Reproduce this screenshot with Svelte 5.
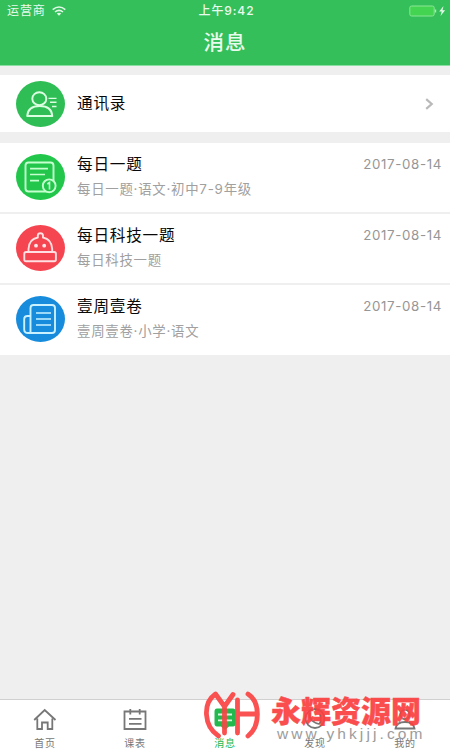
<script lang="ts">
  interface Message {
    icon: string;
    title: string;
    detail: string;
    date: string;
  }

  const messages: Message[] = [
    { icon: 'daily', title: '每日一题', detail: '每日一题·语文·初中7-9年级', date: '2017-08-14' },
    { icon: 'science', title: '每日科技一题', detail: '每日科技一题', date: '2017-08-14' },
    { icon: 'paper', title: '壹周壹卷', detail: '壹周壹卷·小学·语文', date: '2017-08-14' }
  ];

  const tabs = [
    { id: 'home', label: '首页' },
    { id: 'course', label: '课表' },
    { id: 'message', label: '消息' },
    { id: 'find', label: '发现' },
    { id: 'mine', label: '我的' }
  ];

  let active = $state('message');
</script>

<div class="screen">
  <header>
    <div class="status">
      <div class="carrier">
        <span>运营商</span>
        <svg width="14" height="10" viewBox="0 0 14 10" fill="none" stroke="#e3f9e8" stroke-width="1.6">
          <path d="M.7 3.6Q7-1.6 13.3 3.6M3 6Q7 2.8 11 6" />
          <path d="M4.8 7.5Q7 6 9.2 7.5L7 9.8Z" fill="#e3f9e8" stroke="none" />
        </svg>
      </div>
      <span class="time">上午9:42</span>
      <div class="battery">
        <svg width="37" height="12" viewBox="0 0 37 12">
          <rect x=".8" y="1" width="24.4" height="10" rx="1.8" fill="#43d451" stroke="#8be695" />
          <path d="M26.5 4.5v3" stroke="#a5edb0" stroke-width="1.4" />
          <path d="M34.5 1l-4.3 5.5h2.5L31.5 11l4.6-5.8h-2.6Z" fill="#e3f9e8" />
        </svg>
      </div>
    </div>
    <h1>消息</h1>
  </header>

  <main>
    <button class="contacts">
      <svg class="avatar" viewBox="0 0 49 46" preserveAspectRatio="none" fill="none" stroke="#dcffe2" stroke-width="1.9">
        <ellipse cx="24.5" cy="23" rx="24.5" ry="23" fill="#2fbe55" stroke="none" />
        <ellipse cx="23.3" cy="17.7" rx="7" ry="6.5" />
        <path d="M11.2 35Q12 25 23.7 25Q35.5 25 36.3 35Z" stroke-linejoin="round" />
        <path d="M32.5 17.4h8M34 21.3h6.5M36 25.5h4.5" stroke-width="1.4" />
      </svg>
      <span class="name">通讯录</span>
      <svg class="arrow" width="9" height="12" viewBox="0 0 9 12" fill="none" stroke="#b9b9b9" stroke-width="2.2">
        <path d="M1.2 1.2L6.7 6L1.2 10.8" />
      </svg>
    </button>

    <ul>
      {#each messages as message}
        <li>
          <svg class="avatar" viewBox="0 0 49 46" preserveAspectRatio="none" fill="none" stroke-width="1.9">
            {#if message.icon === 'daily'}
              <ellipse cx="24.5" cy="23" rx="24.5" ry="23" fill="#22c64b" />
              <g stroke="#c5ffd0">
                <rect x="9.5" y="8.5" width="28" height="29" rx="3" />
                <path d="M14 14.7h18M14 20.5h15M14 26.7h9" stroke-width="1.7" />
                <circle cx="33.2" cy="31.8" r="6.4" fill="#22c64b" />
                <path d="M31.3 30l2.2-1.5v7" stroke-width="1.6" />
              </g>
            {:else if message.icon === 'science'}
              <ellipse cx="24.5" cy="23" rx="24.5" ry="23" fill="#f54550" />
              <g stroke="#ffdfe1" stroke-linejoin="round">
                <path d="M12.5 27V24Q13 14 21.8 12.5V10.5Q22 8.3 24.4 8.3Q26.8 8.3 27 10.5V12.5Q35.5 14 36.2 24V27" />
                <rect x="8.3" y="27" width="31.6" height="9.2" rx="1.8" />
                <circle cx="20" cy="20.7" r="1.9" fill="#ffe9ea" stroke="none" />
                <circle cx="28.2" cy="20.7" r="1.9" fill="#ffe9ea" stroke="none" />
              </g>
            {:else}
              <ellipse cx="24.5" cy="23" rx="24.5" ry="23" fill="#178cdc" />
              <g stroke="#c9f1ff">
                <path d="M14.5 36.5V12Q14.5 9 17.5 9H36Q39 9 39 12V34Q39 37 36 37H12Q8.2 37 8.2 33.5V23Q8.2 20 11.5 20H14.5" />
                <path d="M20 17h15M20 23h15M20 29h15" stroke-width="1.7" />
              </g>
            {/if}
          </svg>
          <div class="text">
            <div class="top">
              <span class="name">{message.title}</span>
              <span class="date">{message.date}</span>
            </div>
            <p>{message.detail}</p>
          </div>
        </li>
      {/each}
    </ul>
  </main>

  <nav>
    {#each tabs as tab}
      <button class="tab" class:active={active === tab.id} onclick={() => (active = tab.id)}>
        <svg width="26" height="24" viewBox="0 0 26 24" fill="none" stroke="currentColor" stroke-width="1.8">
          {#if tab.id === 'home'}
            <path d="M2.2 12L12.7 2L23.5 12M5.3 10.5V21H10V14.5H15.7V21H20.3V10.5" />
          {:else if tab.id === 'course'}
            <path d="M2.5 3.5H23.5V21H2.5ZM8.3 1V6.5M17.7 1V6.5M7 10.8H19.5M7 15.8H19.5" />
          {:else if tab.id === 'message'}
            <path d="M5 .5H21Q23.5 .5 23.5 3.5V15.5Q23.5 18.5 21 18.5H17L13 22L9 18.5H5Q2.5 18.5 2.5 15.5V3.5Q2.5 .5 5 .5Z" fill="currentColor" stroke="none" />
            <path d="M6 6.5H20M6 12.3H20" stroke="#d9f5df" />
          {:else if tab.id === 'find'}
            <circle cx="13" cy="10.5" r="9.5" />
            <path d="M8 5Q6 13 17 16Q20 14 18 6" />
          {:else}
            <circle cx="13" cy="6.5" r="4.6" />
            <path d="M3.5 20.5Q4.5 14 13 14Q21.5 14 22.5 20.5Z" />
          {/if}
        </svg>
        <span>{tab.label}</span>
      </button>
    {/each}
  </nav>

  <div class="watermark">
    <svg width="56" height="50" viewBox="0 0 56 50" fill="none" stroke="#fa4545" stroke-width="4.8" stroke-linecap="round" stroke-linejoin="round">
      <path d="M14.5 46C-.5 36 -1.5 13 11.5 4L20.5 16.5L29 4.5M20.5 16.5V43" />
      <path d="M33.5 10V43M33.5 24H53M44 4C56.5 12 56.5 36 44 46" />
    </svg>
    <div class="brand">
      <strong>永辉资源网</strong>
      <span>www.yhkjjj.com</span>
    </div>
  </div>
</div>

<style>
  :global(body) {
    margin: 0;
  }

  .screen {
    position: relative;
    display: flex;
    flex-direction: column;
    width: 450px;
    height: 750px;
    overflow: hidden;
    background: #efefef;
    color: #080808;
    font-family: Inter, "Noto Sans CJK SC", sans-serif;
  }

  header {
    box-sizing: border-box;
    height: 66px;
    background: #34bf5b;
    border-bottom: 1px solid #8cdda1;
    color: #e9fbed;
  }

  .status {
    display: grid;
    grid-template-columns: 1fr auto 1fr;
    align-items: center;
    height: 21px;
    padding: 0 4px 0 7px;
    font-size: 12px;
    line-height: 20px;
    letter-spacing: 0.9px;
  }

  .carrier {
    display: flex;
    align-items: center;
    gap: 6px;
  }

  .time {
    font-weight: 500;
    letter-spacing: 0.9px;
  }

  .battery {
    display: flex;
    justify-content: flex-end;
  }

  h1 {
    margin: 0;
    font-size: 20.5px;
    font-weight: 500;
    line-height: 44px;
    letter-spacing: 1px;
    text-align: center;
  }

  main {
    flex: 1;
    padding-top: 9px;
  }

  button {
    padding: 0;
    border: none;
    background: none;
    font-family: inherit;
    color: inherit;
    cursor: pointer;
  }

  .contacts {
    display: flex;
    align-items: center;
    width: 100%;
    height: 57px;
    padding: 0 16px;
    background: #fff;
    text-align: left;
  }

  .avatar {
    flex: none;
    width: 49px;
    height: 46px;
    margin-right: 12px;
  }

  .name {
    font-size: 15.6px;
    line-height: 22px;
    letter-spacing: 0.8px;
  }

  .arrow {
    margin-left: auto;
  }

  ul {
    margin: 11px 0 0;
    padding: 0;
    list-style: none;
    background: #fff;
  }

  li {
    display: flex;
    box-sizing: border-box;
    height: 71px;
    padding: 11px 8px 0 16px;
    border-bottom: 2px solid #efefef;
  }

  li:last-child {
    border-bottom: none;
    height: 69.5px;
  }

  .text {
    flex: 1;
  }

  .top {
    display: flex;
    justify-content: space-between;
  }

  .date {
    font-size: 13.3px;
    line-height: 20px;
    letter-spacing: 0.65px;
    color: #969696;
  }

  p {
    margin: 2px 0 0;
    font-size: 13.4px;
    line-height: 22px;
    letter-spacing: 0.75px;
    color: #a0a0a0;
  }

  nav {
    display: flex;
    box-sizing: border-box;
    height: 51px;
    border-top: 1px solid #d0d0d0;
    background: #fff;
  }

  .tab {
    display: flex;
    flex: 1;
    flex-direction: column;
    align-items: center;
    padding-top: 8px;
    color: #777;
    font-size: 10px;
    line-height: 20px;
    letter-spacing: 0.7px;
  }

  .tab svg {
    flex: none;
  }

  .tab span {
    margin-top: 1px;
  }

  .active {
    color: #24b94e;
  }

  .watermark {
    position: absolute;
    left: 204px;
    top: 690px;
    display: flex;
    opacity: 0.93;
    pointer-events: none;
  }

  .brand {
    display: flex;
    flex-direction: column;
    margin-left: 11px;
  }

  strong {
    font-size: 30px;
    font-weight: 900;
    line-height: 42px;
    color: #fa4040;
    -webkit-text-stroke: 0.4px #fa4040;
    white-space: nowrap;
  }

  .brand span {
    margin: -6px 0 0 6px;
    font-family: "Liberation Sans", Arial, sans-serif;
    font-size: 15.5px;
    line-height: 16px;
    letter-spacing: 3.1px;
    color: #959595;
  }
</style>
